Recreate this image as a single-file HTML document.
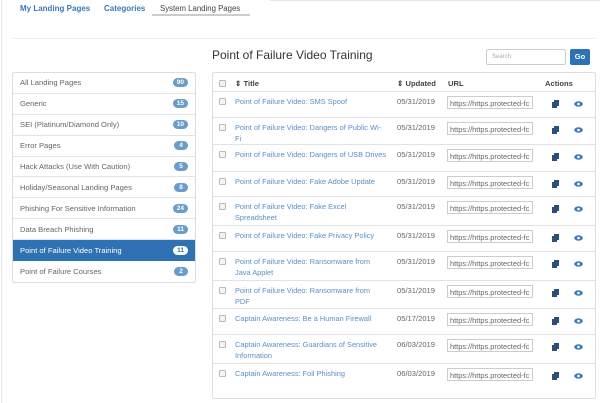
<!DOCTYPE html>
<html><head><meta charset="utf-8"><style>
*{box-sizing:border-box;margin:0;padding:0}
body{width:600px;height:403px;overflow:hidden;background:#fff;font-family:"Liberation Sans",Arial,sans-serif;font-size:8px;color:#333;position:relative}
.abs{position:absolute}
.tab{position:absolute;top:4px;font-size:8px;font-weight:bold;color:#3a7ab8}
.list{position:absolute;left:12px;top:72px;width:184px;border:1px solid #ddd;border-radius:2px}
.li{height:20.9px;border-bottom:1px solid #e4e4e4;padding:0 7px;display:flex;align-items:center;justify-content:space-between;color:#666;font-size:7.6px}
.li:last-child{border-bottom:none}
.li.act{background:#2f72b3;color:#fff;border-color:#2f72b3}
.badge{background:#6a9dc9;color:#fff;font-weight:bold;font-size:6.5px;border-radius:6px;padding:1px 4px;min-width:14px;text-align:center}
.act .badge{background:#fff;color:#2f72b3}
.tbl{position:absolute;left:212px;top:72px;width:384px;height:327px;border:1px solid #ddd;border-radius:2px}
.row{position:absolute;left:0;width:382px;border-top:1px solid #e2e2e2}
.cb{position:absolute;left:6px;width:7px;height:7px;border:1px solid #bbb;border-radius:1px;background:#f3f3f3}
.t{position:absolute;left:22px;width:152px;color:#5a8fc7;font-size:7.4px;line-height:11px}
.d{position:absolute;left:184px;color:#666;font-size:7.6px}
.u{position:absolute;left:234px;width:86px;height:13px;border:1px solid #ccc;color:#666;font-size:7.4px;padding:2px 2px;overflow:hidden;white-space:nowrap}
.cp{position:absolute;left:339px;width:7px;height:8px}
.ey{position:absolute;left:361px;width:9px;height:6px}
.h{font-weight:bold;color:#444;font-size:7.6px;position:absolute;top:6px}
</style></head><body>
<div class="abs" style="left:1px;top:0;width:1px;height:403px;background:#e6e6e6"></div>
<div class="abs" style="left:270px;top:0;width:330px;height:1px;background:#e6e6e6"></div>
<div class="tab" style="left:20px">My Landing Pages</div>
<div class="tab" style="left:104px">Categories</div>
<div class="tab" style="left:160px;color:#444;font-weight:normal;font-size:7.8px">System Landing Pages</div>
<div class="abs" style="left:152px;top:14px;width:98px;height:2px;background:#ccc"></div>
<div class="abs" style="left:12px;top:38px;width:584px;height:1px;background:#eee"></div>
<div class="abs" style="left:212px;top:48px;font-size:12px;color:#333">Point of Failure Video Training</div>
<div class="abs" style="left:486px;top:49px;width:80px;height:16px;border:1px solid #ccc;border-radius:2px;font-size:6px;color:#aaa;padding:4px 5px">Search</div>
<div class="abs" style="left:570px;top:49px;width:20px;height:16px;background:#2f72b3;border-radius:2px;color:#fff;font-size:7.5px;font-weight:bold;text-align:center;line-height:16px">Go</div>
<div class="list">
<div class="li">All Landing Pages<span class="badge">90</span></div>
<div class="li">Generic<span class="badge">15</span></div>
<div class="li">SEI (Platinum/Diamond Only)<span class="badge">10</span></div>
<div class="li">Error Pages<span class="badge">4</span></div>
<div class="li">Hack Attacks (Use With Caution)<span class="badge">5</span></div>
<div class="li">Holiday/Seasonal Landing Pages<span class="badge">8</span></div>
<div class="li">Phishing For Sensitive Information<span class="badge">24</span></div>
<div class="li">Data Breach Phishing<span class="badge">11</span></div>
<div class="li act">Point of Failure Video Training<span class="badge">11</span></div>
<div class="li">Point of Failure Courses<span class="badge">2</span></div>
</div>
<div class="tbl">
<div class="cb" style="top:7px"></div>
<div class="h" style="left:22px">⇕ Title</div>
<div class="h" style="left:184px">⇕ Updated</div>
<div class="h" style="left:235px">URL</div>
<div class="h" style="left:332px">Actions</div>
<div id="rows"></div>
</div>
<script>
var R=[["Point of Failure Video: SMS Spoof","05/31/2019",18,26],["Point of Failure Video: Dangers of Public Wi-Fi","05/31/2019",44,27],["Point of Failure Video: Dangers of USB Drives","05/31/2019",71,27],["Point of Failure Video: Fake Adobe Update","05/31/2019",98,25],["Point of Failure Video: Fake Excel Spreadsheet","05/31/2019",123,29],["Point of Failure Video: Fake Privacy Policy","05/31/2019",152,26],["Point of Failure Video: Ransomware from Java Applet","05/31/2019",178,29],["Point of Failure Video: Ransomware from<br>PDF","05/31/2019",207,28],["Captain Awareness: Be a Human Firewall","05/17/2019",235,26],["Captain Awareness: Guardians of Sensitive Information","06/03/2019",261,29],["Captain Awareness: Foil Phishing","06/03/2019",290,37]];
var h='';R.forEach(function(r){h+='<div class="row" style="top:'+r[2]+'px;height:'+r[3]+'px"><div class="cb" style="top:6px"></div><div class="t" style="top:4px">'+r[0]+'</div><div class="d" style="top:5px">'+r[1]+'</div><div class="u" style="top:4px">https://https.protected-fc</div><svg class="cp" style="top:8px" viewBox="0 0 7 8"><rect x="0" y="2" width="5" height="6" fill="#2a4f7a"/><rect x="2" y="0" width="5" height="6" fill="#2a4f7a"/></svg><svg class="ey" style="top:9px" viewBox="0 0 9 6"><ellipse cx="4.5" cy="3" rx="4.3" ry="2.7" fill="#3a7ab8"/><circle cx="4.5" cy="3" r="1.3" fill="#fff"/></svg></div>'});
document.getElementById('rows').innerHTML=h;
</script>
</body></html>
